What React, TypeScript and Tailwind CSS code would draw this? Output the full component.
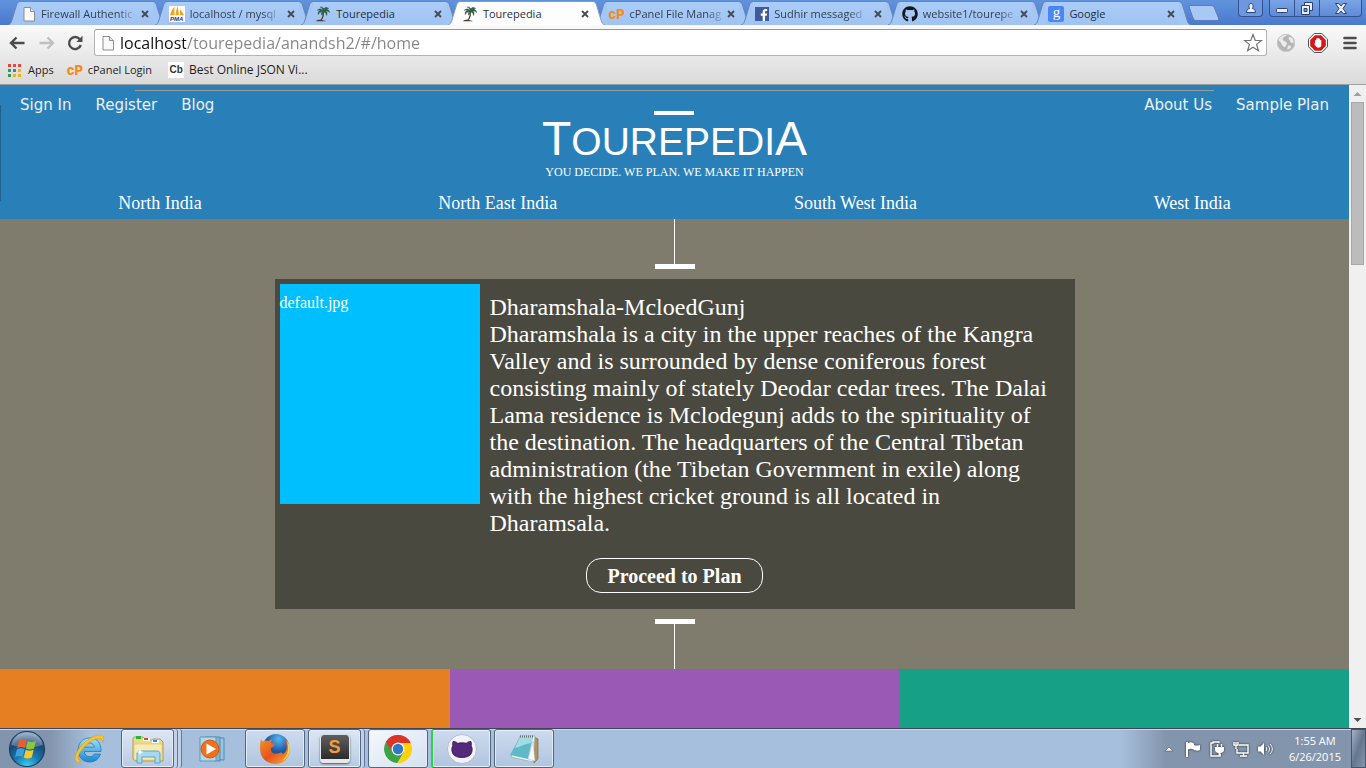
import React from "react";
import { FaFacebookF, FaGithub } from "react-icons/fa";

const DocIcon = ({ className = "h-4 w-[14px]" }: { className?: string }) => (
  <svg viewBox="0 0 14 16" className={`shrink-0 ${className}`} aria-hidden="true">
    <path d="M2 1.5h6.5L12.5 5.5V15H2z" fill="#fafafa" stroke="#8d8d8d" />
    <path d="M8.5 1.5v4h4" fill="#e4e4e4" stroke="#8d8d8d" />
  </svg>
);

const PalmIcon = () => (
  <svg viewBox="0 0 16 16" className="h-4 w-4 shrink-0" aria-hidden="true">
    <path d="M8 4.5C9.8 8 9 11 6.8 14.3H5.2C7.6 11 8.2 8 7.2 5z" fill="#5a4630" />
    <path
      d="M8 4.6C6.5 2.6 4 2.4 2.2 4.4c1.8-.5 2.5-.4 3.2.2C3.6 5 2.8 6.5 3.2 8.6 4 7 5.2 6 7 5.6c-.6 1.2-.7 2.3-.2 3.6C7.3 7.800 7.9 6.800 8.800 5.900c1.800.600 2.600 1.800 2.800 3.600.900-2 .5-3.500-.9-4.400 1.600-.2 2.800.3 3.900 1.500-.3-2.200-1.600-3.400-3.600-3.300.7-.7 1.500-1 2.700-.9C11.600.8 9.500 1.200 8.700 3 8.300 1.600 7.200.8 5.300 1 6.800 1.700 7.700 2.800 8 4.600z"
      fill="#2f6648"
      stroke="#1e3c30"
      strokeWidth=".4"
    />
    <path d="M.8 15.300c1.500-1.500 4-1.700 5.500-1.400 2 .1 3.500.6 4.400 1.400z" fill="#4a3826" />
  </svg>
);

const PmaIcon = () => (
  <span className="flex h-4 w-4 shrink-0 flex-col items-center bg-white">
    <svg viewBox="0 0 16 10" className="h-[10px] w-4" aria-hidden="true">
      <path d="M1 9.500C2 6 3 3.500 5.500.5V9zM6.500 9.300C7 5 7.500 3 8.700.5L10 9zM11 9V3.500C13 5.500 14.500 7.500 15 9.500z" fill="#f7a11a" />
    </svg>
    <span className="font-['Liberation_Sans'] text-[6px] font-bold italic leading-[6px] text-[#33356b]">PMA</span>
  </span>
);

const CpIcon = () => (
  <span className="w-4 shrink-0 text-center font-['Inter',sans-serif] text-[13px] font-extrabold leading-4 text-[#f68b1f]">cP</span>
);

const FbIcon = () => (
  <span className="flex h-[14px] w-[14px] shrink-0 items-end justify-center bg-[#3f5b9b] pl-1">
    <FaFacebookF className="h-3 w-[10px] text-white" />
  </span>
);

const GoogleIcon = () => (
  <span className="flex h-4 w-4 shrink-0 items-center justify-center rounded-[2px] bg-[#4a87f4] pb-[3px] font-['Liberation_Serif',serif] text-[15px] leading-4 text-white">
    g
  </span>
);

const tabs = [
  { title: "Firewall Authentic", icon: <DocIcon />, long: true },
  { title: "localhost / mysql", icon: <PmaIcon />, long: true },
  { title: "Tourepedia", icon: <PalmIcon /> },
  { title: "Tourepedia", icon: <PalmIcon />, active: true },
  { title: "cPanel File Manag", icon: <CpIcon />, long: true },
  { title: "Sudhir messaged", icon: <FbIcon />, long: true },
  { title: "website1/tourepe", icon: <FaGithub className="h-4 w-4 shrink-0 text-[#14181c]" />, long: true },
  { title: "Google", icon: <GoogleIcon /> },
];

function Tab({ title, icon, active, long }: { title: string; icon: React.ReactNode; active?: boolean; long?: boolean }) {
  const fill = active ? "#fdfdfd" : "#a4c6f5";
  const stroke = active ? "#7f9cc9" : "#6486bb";
  return (
    <li className={active ? "relative z-10 min-w-0 flex-1" : "relative min-w-0 flex-1"}>
      <div className="-mr-[10px] flex h-6">
        <svg viewBox="0 0 12 24" className="h-6 w-3 shrink-0" aria-hidden="true">
          <path d="M0 24C2.500 23 3 22 4 19L8.500 4C9.500 1.500 10.500.500 12 .500V24z" fill={fill} />
          <path d="M0 24C2.500 23 3 22 4 19L8.500 4C9.500 1.500 10.500.500 12 .500" fill="none" stroke={stroke} />
        </svg>
        <div
          className={
            active
              ? "flex min-w-0 flex-1 items-center border-t border-[#7f9cc9] bg-[#fdfdfd] pl-[2px]"
              : "flex min-w-0 flex-1 items-center border-t border-[#6486bb] bg-linear-to-b from-[#abcdf8] to-[#9fc2f2] pl-[2px]"
          }
        >
          <button type="button" className="flex min-w-0 flex-1 items-center gap-[5px] text-left">
            {icon}
            <span
              className={
                long
                  ? "min-w-0 whitespace-nowrap text-[11px] leading-4 text-[#333f50] [mask-image:linear-gradient(to_right,#000_85%,#0004)]"
                  : "min-w-0 whitespace-nowrap text-[11px] leading-4 text-[#26303e]"
              }
            >
              {title}
            </span>
          </button>
          <button type="button" aria-label={`Close ${title}`} className="flex h-4 w-4 shrink-0 items-center justify-center">
            <svg viewBox="0 0 8 8" className="h-2 w-2" aria-hidden="true">
              <path d="M1 1l6 6M7 1L1 7" stroke="#434a54" strokeWidth="1.800" />
            </svg>
          </button>
        </div>
        <svg viewBox="0 0 12 24" className="h-6 w-3 shrink-0" aria-hidden="true">
          <path d="M12 24C9.500 23 9 22 8 19L3.500 4C2.500 1.500 1.500.500 0 .500V24z" fill={fill} />
          <path d="M12 24C9.500 23 9 22 8 19L3.500 4C2.500 1.500 1.500.500 0 .500" fill="none" stroke={stroke} />
        </svg>
      </div>
    </li>
  );
}

function WindowButtons() {
  const glyph = { fill: "#e8effa", stroke: "#2c4272", strokeWidth: 1 };
  return (
    <div className="flex w-[178px] shrink-0 items-start">
      <button type="button" aria-label="New tab" className="mt-[5px]">
        <svg viewBox="0 0 32 16" className="h-4 w-8" aria-hidden="true">
          <path d="M2.500.500H23C25 .500 26 1.500 26.500 3L30.500 13C31 14.500 30.500 15.500 29 15.500H9C7 15.500 6 15 5 13L1.500 3C1 1.500 1 .500 2.500.500z" fill="#a9c9f5" stroke="#5a7fb9" />
        </svg>
      </button>
      <button type="button" aria-label="Profile" className="ml-[18px] flex h-[17px] w-[25px] items-center justify-center rounded-b border border-t-0 border-[#34528f] bg-[#6d98df]">
        <svg viewBox="0 0 12 12" className="h-3 w-3" aria-hidden="true">
          <path d="M6 1.500C8.500 1.500 8.500 4.500 7.500 6.500C9.500 7 10.500 8 10.500 10.500H1.500C1.500 8 2.500 7 4.500 6.500C3.500 4.500 3.500 1.500 6 1.500z" {...glyph} />
        </svg>
      </button>
      <div className="ml-[6px] flex h-[17px] divide-x divide-[#34528f] overflow-hidden rounded-b border border-t-0 border-[#34528f] bg-linear-to-b from-[#7ba4e6] to-[#5f8bd6]">
        <button type="button" aria-label="Minimize" className="flex w-[25px] items-end justify-center pb-[2px]">
          <svg viewBox="0 0 12 6" className="h-[6px] w-3" aria-hidden="true"><rect x=".5" y=".5" width="11" height="4" rx="1" {...glyph} /></svg>
        </button>
        <button type="button" aria-label="Restore" className="flex w-[25px] items-center justify-center">
          <svg viewBox="0 0 14 13" className="h-[13px] w-[14px]" aria-hidden="true">
            <path d="M4.500.500h8v8h-8z" {...glyph} />
            <path d="M1.500 3.500h8v9h-8z" {...glyph} />
            <path d="M4 6.500h3v3H4z" fill="#6d98df" stroke="#2c4272" />
          </svg>
        </button>
        <button type="button" aria-label="Close window" className="flex w-[41px] items-center justify-center">
          <svg viewBox="0 0 12 11" className="h-[11px] w-3" aria-hidden="true">
            <path d="M.5.500h3.300L6 3 8.200.500h3.300L8 5.500l3.500 5H8.200L6 8 3.800 10.500H.5L4 5.500z" {...glyph} />
          </svg>
        </button>
      </div>
    </div>
  );
}

function BrowserChrome() {
  return (
    <header className="font-['Open_Sans','Noto_Sans',sans-serif]">
      <div className="flex h-[25px] bg-linear-to-b from-[#6193dd] to-[#4b79cd] pt-px">
        <ul className="flex min-w-0 flex-1 pl-2">
          {tabs.map((t, i) => (
            <Tab key={i} {...t} />
          ))}
        </ul>
        <div className="-mt-px ml-[7px] shrink-0">
          <WindowButtons />
        </div>
      </div>
      <div className="border-b border-[#a0a0a0] bg-linear-to-b from-[#fafafa] to-[#dadada]">
        <div className="flex items-center pt-1 pr-[9px] pl-[9px]">
          <button type="button" aria-label="Back" className="shrink-0">
            <svg viewBox="0 0 16 14" className="h-[14px] w-4" aria-hidden="true">
              <path d="M7.500 1.500L2 7l5.500 5.500M2.500 7H15.500" fill="none" stroke="#4c4c4c" strokeWidth="2.400" />
            </svg>
          </button>
          <button type="button" aria-label="Forward" className="ml-[14px] shrink-0">
            <svg viewBox="0 0 16 14" className="h-[14px] w-4" aria-hidden="true">
              <path d="M8.500 1.500L14 7l-5.500 5.500M13.500 7H.500" fill="none" stroke="#c0c0c0" strokeWidth="2.400" />
            </svg>
          </button>
          <button type="button" aria-label="Reload" className="ml-3 shrink-0">
            <svg viewBox="0 0 16 16" className="h-4 w-4" aria-hidden="true">
              <path d="M12.800 4.300A6 6 0 1 0 13.800 10" fill="none" stroke="#4c4c4c" strokeWidth="2.400" />
              <path d="M15.500.800V7H9.300z" fill="#4c4c4c" />
            </svg>
          </button>
          <div className="ml-[11px] flex h-[27px] min-w-0 flex-1 items-center rounded-[3px] border border-[#b4b4b4] border-t-[#989898] bg-white pr-[3px] pl-[6px]">
            <DocIcon />
            <input
              type="text"
              aria-label="Address"
              defaultValue="localhost/tourepedia/anandsh2/#/home"
              className="ml-[5px] h-6 min-w-0 flex-1 bg-[linear-gradient(90deg,#111_66px,#858585_66px)] bg-clip-text text-[15px] leading-6 text-transparent outline-none md:text-[16px]"
            />
            <button type="button" aria-label="Bookmark this page" className="shrink-0">
              <svg viewBox="0 0 20 20" className="h-5 w-5" aria-hidden="true">
                <path d="M10 1.500l2.300 6h6.200l-4.900 3.900 1.800 6.300L10 14.200l-5.400 3.500 1.800-6.300L1.500 7.500h6.200z" fill="#fff" stroke="#737373" strokeWidth="1.200" />
              </svg>
            </button>
          </div>
          <button type="button" aria-label="Globe extension" className="ml-[9px] shrink-0">
            <svg viewBox="0 0 20 20" className="h-5 w-5" aria-hidden="true">
              <circle cx="10" cy="10" r="9" fill="#b5b5b5" />
              <path d="M3 5c3-4 7-4 8-3-1 2-3 1-4 3s1 3 3 4 0 4-1 5-3-2-4-4-3-2-2-5zM13 4c3 0 4 2 5 5-2 2-3 1-4-1s-2-2-1-4zM12 13c2-1 3 0 3 1s-3 3-4 2z" fill="#ebebeb" />
              <circle cx="10" cy="10" r="8.500" fill="none" stroke="#c9c9c9" />
            </svg>
          </button>
          <button type="button" aria-label="Ad blocker" className="ml-3 shrink-0">
            <svg viewBox="0 0 20 20" className="h-5 w-5" aria-hidden="true">
              <path d="M6.200.500h7.600l5.700 5.700v7.600l-5.700 5.700H6.200L.500 13.800V6.200z" fill="#fff" stroke="#555" />
              <path d="M6.900 2.200h6.200l4.700 4.700v6.200l-4.700 4.700H6.900l-4.700-4.700V6.900z" fill="#d8161a" />
              <path d="M7 11V7.200h1.200V5.600h1.300V5h1.300v.7h1.300v1.200h1.200V12c0 1.800-1.300 2.800-2.800 2.800S8 13.800 7 12l-1.500-2z" fill="#fff" />
            </svg>
          </button>
          <button type="button" aria-label="Menu" className="ml-[15px] shrink-0">
            <svg viewBox="0 0 14 14" className="h-[14px] w-[14px]" aria-hidden="true">
              <path d="M1.500 2h11M1.500 7h11M1.500 12h11" stroke="#4c4c4c" strokeWidth="2.600" strokeLinecap="round" />
            </svg>
          </button>
        </div>
        <nav className="flex h-7 items-center pl-2 text-[11px] leading-4 text-[#1e1e1e]">
          <a href="#apps" className="flex items-center gap-[7px]">
            <svg viewBox="0 0 13 13" className="h-[13px] w-[13px]" aria-hidden="true">
              <path d="M0 0h3v3H0zM5 0h3v3H5zM10 0h3v3h-3z" fill="#e8453c" />
              <path d="M0 5h3v3H0zM0 10h3v3H0z" fill="#2f9e55" />
              <path d="M5 5h3v3H5z" fill="#2b7de9" />
              <path d="M10 5h3v3h-3zM5 10h3v3H5zM10 10h3v3h-3z" fill="#f4b400" />
            </svg>
            Apps
          </a>
          <a href="#cpanel" className="ml-[13px] flex items-center gap-[5px]">
            <CpIcon />
            cPanel Login
          </a>
          <a href="#json" className="ml-4 flex items-center gap-[5px]">
            <span className="flex h-4 w-4 items-center justify-center bg-white font-['Liberation_Sans',sans-serif] text-[10px] font-bold text-[#333]">Cb</span>
            <span className="text-[12px]">Best Online JSON Vi...</span>
          </a>
        </nav>
      </div>
    </header>
  );
}

const regions = ["North India", "North East India", "South West India", "West India"];

function SiteHeader() {
  return (
    <header className="relative bg-[#2980b9] pt-[5px] text-white">
      <span className="absolute top-5 left-0 h-24 w-px bg-[#1f618d]" />
      <hr className="mx-auto w-4/5 border-t border-[#9a9a9a]" />
      <div className="grid grid-cols-[1fr_auto_1fr] px-5">
        <nav className="flex gap-6 pt-px font-['DejaVu_Sans',Verdana,sans-serif] text-[15px] leading-[26px] text-[#ecf0f1]">
          <a href="#signin">Sign In</a>
          <a href="#register">Register</a>
          <a href="#blog">Blog</a>
        </nav>
        <a href="#home" className="flex flex-col items-center pt-5 text-center">
          <span className="h-1 w-10 bg-white" />
          <span className="font-['Liberation_Sans',Arial,sans-serif] text-[48px] leading-[48px]">
            T<span className="text-[39px] leading-none">OUREPEDI</span>A
          </span>
          <span className="font-['Liberation_Serif',serif] text-[12px] leading-[18px]">YOU DECIDE. WE PLAN. WE MAKE IT HAPPEN</span>
        </a>
        <nav className="flex justify-end gap-6 pt-px font-['DejaVu_Sans',Verdana,sans-serif] text-[15px] leading-[26px] text-[#ecf0f1]">
          <a href="#about">About Us</a>
          <a href="#sample">Sample Plan</a>
        </nav>
      </div>
      <nav className="flex pt-[10px] pb-1 font-['Liberation_Serif',serif] text-[18px] leading-6">
        {regions.map((r) => (
          <a key={r} href="#region" className="flex-auto text-center">
            {r}
          </a>
        ))}
      </nav>
    </header>
  );
}

function Destination() {
  return (
    <section className="flex flex-col items-center bg-[#7f7c6d] font-['Liberation_Serif',serif] text-white">
      <span className="h-[45px] w-px bg-white" />
      <span className="h-[5px] w-10 bg-white" />
      <article className="my-[10px] w-full max-w-[800px] bg-[#4a4940] p-[5px] pb-4">
        <div className="flex gap-[10px]">
          <div className="h-[220px] w-[200px] shrink-0 bg-[#00bfff] pt-[10px] text-[16px] leading-[18px]">default.jpg</div>
          <div className="pt-[10px] pr-5 text-[24px] leading-[27px]">
            <h2>Dharamshala-McloedGunj</h2>
            <p>
              Dharamshala is a city in the upper reaches of the Kangra Valley and is surrounded by dense coniferous forest
              consisting mainly of stately Deodar cedar trees. The Dalai Lama residence is Mclodegunj adds to the
              spirituality of the destination. The headquarters of the Central Tibetan administration (the Tibetan
              Government in exile) along with the highest cricket ground is all located in Dharamsala.
            </p>
          </div>
        </div>
        <div className="mt-[21px] flex justify-center">
          <button type="button" className="h-[35px] rounded-[15px] border border-white px-5 text-[20px] font-bold leading-6">
            Proceed to Plan
          </button>
        </div>
      </article>
      <span className="h-[5px] w-10 bg-white" />
      <span className="h-[45px] w-px bg-white" />
    </section>
  );
}

function Scrollbar() {
  return (
    <div className="flex w-[17px] shrink-0 flex-col items-center bg-[#f0f0f0]" aria-hidden="true">
      <svg viewBox="0 0 17 17" className="h-[17px] w-[17px]">
        <path d="M4.500 11L8.500 7l4 4z" fill="#a0a0a0" />
      </svg>
      <div className="h-[163px] w-[13px] border border-[#a8a8a8] bg-[#bcbcbc]" />
      <svg viewBox="0 0 17 17" className="mt-auto h-[17px] w-[17px]">
        <path d="M4.500 7l4 4 4-4z" fill="#505050" />
      </svg>
    </div>
  );
}

const StartOrb = () => (
  <svg viewBox="0 0 38 38" className="h-[38px] w-[38px]" aria-hidden="true">
    <defs>
      <radialGradient id="orb" cx=".5" cy="1" r=".95">
        <stop offset="0" stopColor="#3fd0f5" />
        <stop offset=".4" stopColor="#1878ad" />
        <stop offset=".75" stopColor="#1a4776" />
        <stop offset="1" stopColor="#7b98b8" />
      </radialGradient>
    </defs>
    <circle cx="19" cy="19" r="17.500" fill="url(#orb)" stroke="#1d3f66" strokeWidth="1.200" />
    <path d="M3.500 15C5 7 11 2.500 19 2.500S33 7 34.500 15C25 18 14 18 3.500 15z" fill="#fff" opacity=".25" />
    <path d="M11 10.500c2.700-1.700 5.200-1.600 7.700-.2L16.800 18c-2.500-1.400-5-1.400-7.600.2z" fill="#e8602a" />
    <path d="M19.800 11c2.700 1.400 5.200 1.400 8.200-.2l-2 7.700c-2.800 1.400-5.300 1.400-8 .100z" fill="#8cc63e" />
    <path d="M8.900 19.400c2.600-1.600 5.100-1.500 7.600-.2l-1.900 7.700c-2.500-1.300-5-1.300-7.600.3z" fill="#3fa0e0" />
    <path d="M17.700 19.800c2.700 1.300 5.200 1.300 8-.1l-2 7.700c-2.700 1.400-5.200 1.400-7.900.1z" fill="#fbc926" />
  </svg>
);

const IeIcon = () => (
  <svg viewBox="0 0 32 32" className="h-8 w-8" aria-hidden="true">
    <defs>
      <linearGradient id="ie" x2="0" y2="1">
        <stop offset="0" stopColor="#9be4fb" />
        <stop offset="1" stopColor="#1c86cf" />
      </linearGradient>
    </defs>
    <path d="M16.500 5C9.500 5 5 10.500 5 17s4.500 12 11.500 12c5.500 0 9.500-3 11-8h-6.200c-1 1.800-2.500 2.700-4.600 2.700-3 0-5.200-1.900-5.400-5.200H28C28.500 10.500 24.500 5 16.500 5zM11.400 14.200c.4-2.700 2.300-4.300 5-4.300s4.700 1.600 5 4.300z" fill="url(#ie)" stroke="#1874b5" strokeWidth=".7" />
    <path d="M4 29C-1 26 5 14 14 7.500 22 1.500 29 .5 30.500 4c.7 1.500.3 3.500-.5 5.500C29.500 6 27.500 4.500 23 6 15 8.500 5.500 18.500 5 24.500c-.2 2 1 3 3.500 3C7 29.300 5.500 29.800 4 29z" fill="#f7c52c" stroke="#d99a12" strokeWidth=".5" />
  </svg>
);

const FolderIcon = () => (
  <svg viewBox="0 0 34 32" className="h-8 w-[34px]" aria-hidden="true">
    <path d="M2 26V6c0-1 .5-2 1.500-2H12l2 3h8V6h7l3 3v19H4z" fill="#ecd88a" stroke="#b89b45" />
    <path d="M5 3h5v3H5z" fill="#27b43b" />
    <path d="M12 5h7v3h-7zM12 5h3v3h-3z" fill="#fff" />
    <path d="M13 5h4v2h-4z" fill="#d84a2b" />
    <path d="M21 7h7v3h-7z" fill="#fff" />
    <path d="M22 7h4v2h-4z" fill="#2f8de0" />
    <path d="M3 11h28v16H3z" fill="#f7ebb3" stroke="#d6c074" strokeWidth=".6" />
    <path d="M6 30V21c0-2 1-3 3-3h17c2 0 3 1 3 3v9h-5v-6H11v6z" fill="#a7d9ee" stroke="#5aa6c8" />
    <path d="M9 15l.8 3.200L13 19l-3.200.8L9 23l-.8-3.200L5 19l3.200-.8z" fill="#fff" />
  </svg>
);

const PlayerIcon = () => (
  <svg viewBox="0 0 28 28" className="h-7 w-7" aria-hidden="true">
    <path d="M10 3h15v22l-15-1z" fill="#9cc4dd" stroke="#4e8bb0" />
    <path d="M6 2h15v24L6 25z" fill="#84b6d4" stroke="#4e8bb0" />
    <path d="M1 2h16v24H1z" fill="#b5d6ea" stroke="#5c97bb" />
    <circle cx="11" cy="14" r="9" fill="#f0711c" stroke="#d9560e" />
    <path d="M7.500 8.500v11l9.500-5.500z" fill="#fff" />
  </svg>
);

const FirefoxIcon = () => (
  <svg viewBox="0 0 32 32" className="h-8 w-8" aria-hidden="true">
    <defs>
      <radialGradient id="ffglobe" cx=".6" cy=".2" r=".9">
        <stop offset="0" stopColor="#59b6ec" />
        <stop offset=".5" stopColor="#1f5ca8" />
        <stop offset="1" stopColor="#12285e" />
      </radialGradient>
      <linearGradient id="fffox" x2="1" y2="1">
        <stop offset="0" stopColor="#f19425" />
        <stop offset=".5" stopColor="#e4541f" />
        <stop offset="1" stopColor="#f6b02c" />
      </linearGradient>
    </defs>
    <circle cx="17" cy="14" r="13" fill="url(#ffglobe)" />
    <path d="M2 6c.4 1 1.200 2 2 2.500C6.500 7 8 7.500 9.500 8L13 6c-.5 1.500-1 3-.5 4.300 1.500.2 3 .7 3 1.700 0 1.500-2.500 2-3.500 3.500-.3 3 1.500 5 5 5 3 0 4-1.500 6-1 1 .5.500 1.500-.5 2 4-1 6-5 5-9.500-.5-3-1.500-4.500-3-6 4.500 2.500 6.500 7 6.300 11.500C30.500 25 24.500 31 16.500 31 7.500 31 1 24.500 1 16c0-3.500.2-7 1-10z" fill="url(#fffox)" />
    <path d="M27 7c3 3 4.500 8 3.500 12-1.200 5-4.500 8-8 9.500 4-3.500 6.500-8 6.500-13 0-3-.5-6-2-8.500z" fill="#fbd34b" />
  </svg>
);

const SublimeIcon = () => (
  <span className="flex h-7 w-[30px] items-center justify-center rounded-[4px] border-x border-b-4 border-[#e4e8ec] bg-linear-to-b from-[#606060] to-[#2c2c2c] font-['Liberation_Sans',sans-serif] text-[18px] font-bold leading-5 text-[#f49b3c] shadow-[0_1px_2px_#555]">
    S
  </span>
);

const ChromeIcon = () => (
  <svg viewBox="0 0 30 30" className="h-[30px] w-[30px]" aria-hidden="true">
    <path d="M15 15L2.900 8A14 14 0 0 1 27.100 8z" fill="#dc3227" />
    <path d="M15 15L2.900 8A14 14 0 0 0 14.500 29l7-12z" fill="#3ea247" />
    <path d="M15 9H27.700A14 14 0 0 1 14.500 29L21 18z" fill="#fcd209" />
    <path d="M2.900 8L9.500 18 15 9h12.700A14 14 0 0 0 2.900 8z" fill="#dc3227" />
    <circle cx="15" cy="15" r="6.500" fill="#f4f6f8" />
    <circle cx="15" cy="15" r="5.200" fill="#2f78c4" />
  </svg>
);

const OctocatIcon = () => (
  <svg viewBox="0 0 32 32" className="h-8 w-8" aria-hidden="true">
    <circle cx="16" cy="16" r="14.500" fill="#f2f3f8" stroke="#b9b9d2" />
    <path d="M7 8.500c1.500-.3 3.500.6 4.800 1.800 2.800-.6 5.600-.6 8.400 0C21.500 9.100 23.500 8.200 25 8.500c.5 1.600.5 3 .2 4.200 1.300 2 1.200 5 .3 7.300C24 23.500 20 24.500 16 24.500S8 23.500 6.500 20c-.9-2.300-1-5.300.3-7.300C6.500 11.500 6.500 10.100 7 8.500z" fill="#55297c" stroke="#2f174a" strokeWidth=".8" />
  </svg>
);

const NotepadIcon = () => (
  <svg viewBox="0 0 32 32" className="h-8 w-8" aria-hidden="true">
    <path d="M26 4l4 2v20l-4 4z" fill="#b5925a" stroke="#7c6136" strokeWidth=".6" />
    <path d="M12 3h15l-2 26-22-5z" fill="#eef6f8" stroke="#93a7ad" strokeWidth=".7" />
    <path d="M12 4h13L20 26 2 22z" fill="#5fb9c6" />
    <path d="M12 4h13l-1.500 6C16 11 12 14 7 15z" fill="#9fdce4" />
    <path d="M12 3.500h14" stroke="#6b6b6b" strokeWidth="2" strokeDasharray="1 1" />
    <path d="M20 26l5-18 2 20z" fill="#f7fafa" stroke="#a9b8bc" strokeWidth=".5" />
  </svg>
);

function TaskButton({ label, children, look = "normal" }: { label: string; children: React.ReactNode; look?: "normal" | "active" | "new" }) {
  const base = "flex h-full w-[60px] shrink-0 items-center justify-center rounded-[3px] border border-[#54657e] shadow-[inset_0_0_0_1px_#e3ecf8]";
  return (
    <button
      type="button"
      aria-label={label}
      className={
        look === "active"
          ? `${base} bg-linear-to-br from-[#f4f8fd] to-[#d5e1f0]`
          : look === "new"
            ? `${base} border-l-2 border-l-[#25d83a] bg-linear-to-b from-[#cddbee] to-[#b0c5df]`
            : `${base} bg-linear-to-b from-[#cddbee] to-[#b0c5df]`
      }
    >
      {children}
    </button>
  );
}

function StackedTask({ label, lines, children }: { label: string; lines: number; children: React.ReactNode }) {
  return (
    <div className="flex h-full shrink-0">
      <button type="button" aria-label={label} className="flex w-[53px] items-center justify-center rounded-[3px] border border-[#54657e] bg-linear-to-b from-[#dde7f4] to-[#b8cbe3] shadow-[inset_0_0_0_1px_#e3ecf8]">
        {children}
      </button>
      {Array.from({ length: lines }, (_, i) => (
        <span key={i} className="w-1 rounded-r-[3px] border-r border-[#65789a] bg-[#c0d1e8]" />
      ))}
    </div>
  );
}

function Taskbar() {
  const tray = { fill: "none", stroke: "#fff", strokeWidth: 1.4 };
  return (
    <footer className="flex h-10 border-t border-[#3c4656] bg-[linear-gradient(90deg,#8395ad_0,#8395ad_50px,#a6bfdc_90px,#a6bfdc_calc(100%-245px),#8395ad_calc(100%-200px))] font-['Open_Sans','Noto_Sans',sans-serif] shadow-[inset_0_1px_0_#c9d6e8]">
      <div className="flex min-w-0 flex-1 items-center">
        <button type="button" aria-label="Start" className="ml-2 shrink-0"><StartOrb /></button>
        <button type="button" aria-label="Internet Explorer" className="ml-[27px] shrink-0"><IeIcon /></button>
        <div className="ml-4 h-full"><StackedTask label="File Explorer" lines={2}><FolderIcon /></StackedTask></div>
        <button type="button" aria-label="Media Player" className="ml-[17px] shrink-0"><PlayerIcon /></button>
        <div className="ml-[18px] flex h-full gap-[3px]">
          <TaskButton label="Firefox"><FirefoxIcon /></TaskButton>
          <StackedTask label="Sublime Text" lines={1}><SublimeIcon /></StackedTask>
          <TaskButton label="Chrome" look="active"><ChromeIcon /></TaskButton>
          <TaskButton label="GitHub" look="new"><OctocatIcon /></TaskButton>
          <TaskButton label="Notepad"><NotepadIcon /></TaskButton>
        </div>
      </div>
      <div className="flex shrink-0 items-center gap-2 pr-4">
        <svg viewBox="0 0 10 6" className="mr-[3px] h-[6px] w-[10px]" aria-hidden="true"><path d="M1 5l4-4 4 4z" fill="#fff" stroke="#46556b" strokeWidth=".6" /></svg>
        <svg viewBox="0 0 16 16" className="h-4 w-4 drop-shadow-[0_0_1px_#222]" aria-hidden="true">
          <path d="M2 1v15" stroke="#fff" strokeWidth="2" />
          <path d="M3 2c2-1 4-1 6 .5V4c2 .8 4 .8 6 0v5c-2 1-5 1-6.500-.5C6.500 7.500 5 7.500 3 8.500z" fill="#fff" />
        </svg>
        <svg viewBox="0 0 16 16" className="h-4 w-4 drop-shadow-[0_0_1px_#222]" aria-hidden="true">
          <path d="M10 2V1H4v1H2v13h9v-2" {...tray} />
          <path d="M6 6h9v3c0 2-2 3-3.500 3v3h-2v-3C8 12 6 11 6 9z" fill="#fff" />
          <path d="M8.500 3v3M12.500 3v3" {...tray} />
        </svg>
        <svg viewBox="0 0 16 16" className="h-4 w-4 drop-shadow-[0_0_1px_#222]" aria-hidden="true">
          <path d="M6 4h9v8H4V8M7 15h7M10.500 12v3" {...tray} />
          <path d="M1 1v3h4V1M3 4v4M3 1v2" {...tray} />
        </svg>
        <svg viewBox="0 0 16 16" className="h-4 w-4 drop-shadow-[0_0_1px_#222]" aria-hidden="true">
          <path d="M1 5.500h2.500L7 2v12l-3.500-3.500H1z" fill="#fff" />
          <path d="M9 6c1 1 1 3 0 4M11 4.500c2 2 2 5 0 7M13 3c3 3 3 7 0 10" fill="none" stroke="#fff" />
        </svg>
      </div>
      <time className="flex shrink-0 flex-col justify-center pr-[10px] text-center text-[11px] leading-4 text-white">
        <span>1:55 AM</span>
        <span>6/26/2015</span>
      </time>
      <button type="button" aria-label="Show desktop" className="w-[15px] shrink-0 border border-[#47566c] bg-linear-to-br from-[#a5b2c4] via-[#66768d] to-[#8494aa]" />
    </footer>
  );
}

export default function App() {
  return (
    <div className="flex min-h-screen flex-col">
      <BrowserChrome />
      <div className="flex flex-1">
        <main className="flex min-w-0 flex-1 flex-col">
          <SiteHeader />
          <Destination />
          <div className="grid min-h-[59px] flex-1 grid-cols-3">
            <div className="bg-[#e67e22]" />
            <div className="bg-[#9b59b6]" />
            <div className="bg-[#16a085]" />
          </div>
        </main>
        <Scrollbar />
      </div>
      <Taskbar />
    </div>
  );
}
